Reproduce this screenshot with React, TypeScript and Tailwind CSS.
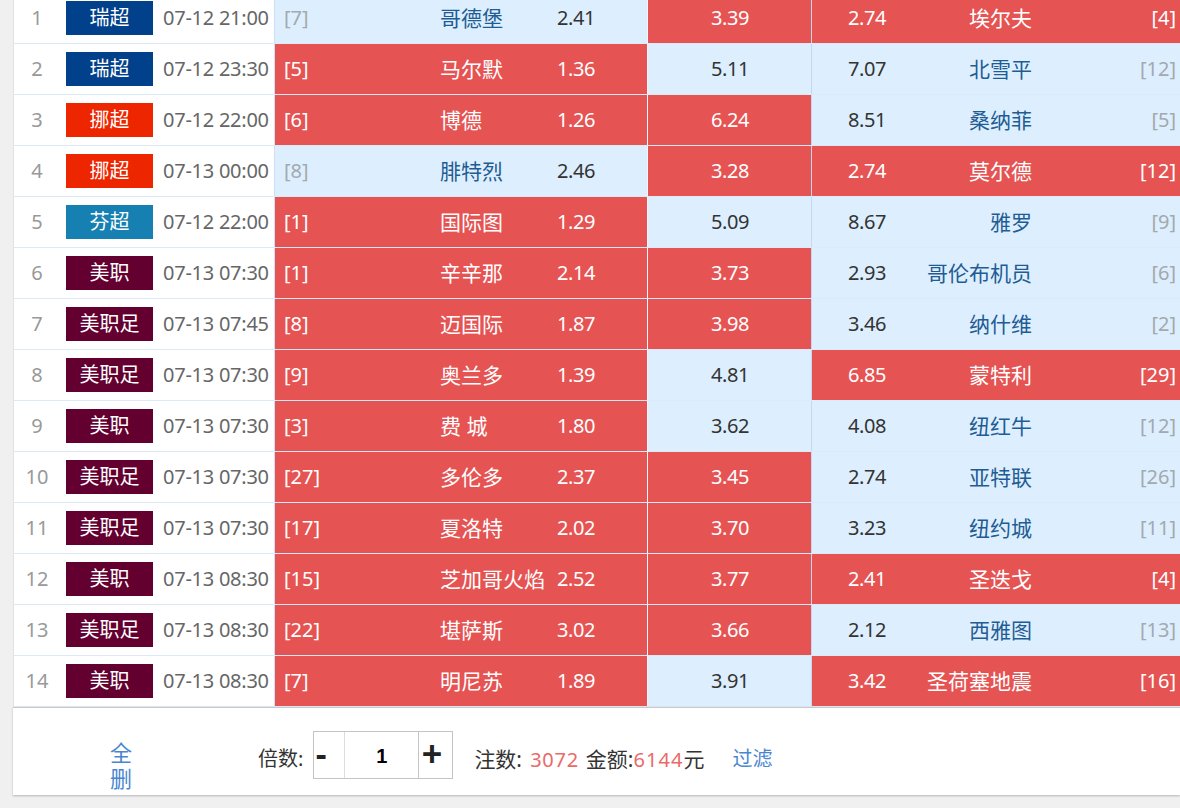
const COLORS = {
  swiss: "bg-[#01408a]",
  norway: "bg-[#ee2600]",
  finland: "bg-[#1680b3]",
  mls: "bg-[#64002f]",
};

type Match = {
  no: number;
  league: string;
  color: string;
  time: string;
  homeRank: string;
  home: string;
  win: string;
  draw: string;
  lose: string;
  away: string;
  awayRank: string;
  picks: [boolean, boolean, boolean];
};

const MATCHES: Match[] = [
  { no: 1, league: "瑞超", color: COLORS.swiss, time: "07-12 21:00", homeRank: "[7]", home: "哥德堡", win: "2.41", draw: "3.39", lose: "2.74", away: "埃尔夫", awayRank: "[4]", picks: [false, true, true] },
  { no: 2, league: "瑞超", color: COLORS.swiss, time: "07-12 23:30", homeRank: "[5]", home: "马尔默", win: "1.36", draw: "5.11", lose: "7.07", away: "北雪平", awayRank: "[12]", picks: [true, false, false] },
  { no: 3, league: "挪超", color: COLORS.norway, time: "07-12 22:00", homeRank: "[6]", home: "博德", win: "1.26", draw: "6.24", lose: "8.51", away: "桑纳菲", awayRank: "[5]", picks: [true, true, false] },
  { no: 4, league: "挪超", color: COLORS.norway, time: "07-13 00:00", homeRank: "[8]", home: "腓特烈", win: "2.46", draw: "3.28", lose: "2.74", away: "莫尔德", awayRank: "[12]", picks: [false, true, true] },
  { no: 5, league: "芬超", color: COLORS.finland, time: "07-12 22:00", homeRank: "[1]", home: "国际图", win: "1.29", draw: "5.09", lose: "8.67", away: "雅罗", awayRank: "[9]", picks: [true, false, false] },
  { no: 6, league: "美职", color: COLORS.mls, time: "07-13 07:30", homeRank: "[1]", home: "辛辛那", win: "2.14", draw: "3.73", lose: "2.93", away: "哥伦布机员", awayRank: "[6]", picks: [true, true, false] },
  { no: 7, league: "美职足", color: COLORS.mls, time: "07-13 07:45", homeRank: "[8]", home: "迈国际", win: "1.87", draw: "3.98", lose: "3.46", away: "纳什维", awayRank: "[2]", picks: [true, true, false] },
  { no: 8, league: "美职足", color: COLORS.mls, time: "07-13 07:30", homeRank: "[9]", home: "奥兰多", win: "1.39", draw: "4.81", lose: "6.85", away: "蒙特利", awayRank: "[29]", picks: [true, false, true] },
  { no: 9, league: "美职", color: COLORS.mls, time: "07-13 07:30", homeRank: "[3]", home: "费 城", win: "1.80", draw: "3.62", lose: "4.08", away: "纽红牛", awayRank: "[12]", picks: [true, false, false] },
  { no: 10, league: "美职足", color: COLORS.mls, time: "07-13 07:30", homeRank: "[27]", home: "多伦多", win: "2.37", draw: "3.45", lose: "2.74", away: "亚特联", awayRank: "[26]", picks: [true, true, false] },
  { no: 11, league: "美职足", color: COLORS.mls, time: "07-13 07:30", homeRank: "[17]", home: "夏洛特", win: "2.02", draw: "3.70", lose: "3.23", away: "纽约城", awayRank: "[11]", picks: [true, true, false] },
  { no: 12, league: "美职", color: COLORS.mls, time: "07-13 08:30", homeRank: "[15]", home: "芝加哥火焰", win: "2.52", draw: "3.77", lose: "2.41", away: "圣迭戈", awayRank: "[4]", picks: [true, true, true] },
  { no: 13, league: "美职足", color: COLORS.mls, time: "07-13 08:30", homeRank: "[22]", home: "堪萨斯", win: "3.02", draw: "3.66", lose: "2.12", away: "西雅图", awayRank: "[13]", picks: [true, true, false] },
  { no: 14, league: "美职", color: COLORS.mls, time: "07-13 08:30", homeRank: "[7]", home: "明尼苏", win: "1.89", draw: "3.91", lose: "3.42", away: "圣荷塞地震", awayRank: "[16]", picks: [true, false, true] },
];

function cellClass(on: boolean) {
  return on ? "bg-[#e55353] text-white" : "bg-[#ddeffe] text-[#333]";
}

function MatchRow({ m }: { m: Match }) {
  const [homeOn, drawOn, awayOn] = m.picks;
  return (
    <div className="flex h-[51px] border-b border-[#dde9f7] bg-white">
      <div className="w-[46px] shrink-0 pt-[10px] text-center text-[#999]">{m.no}</div>
      <div className="ml-[6px] mt-[8px] h-[34px] w-[87px] shrink-0">
        <div className={`flex h-full items-center justify-center pb-[1px] text-white ${m.color}`}>{m.league}</div>
      </div>
      <div className="ml-[10px] w-[111px] shrink-0 whitespace-nowrap pt-[10px] tracking-[-0.25px] text-[#666]">{m.time}</div>

      <div className={`flex w-[373px] shrink-0 border-l border-[#cfe0f2] pl-[9px] pt-[10px] ${cellClass(homeOn)}`}>
        <span className={`w-[156px] shrink-0 ${homeOn ? "text-white" : "text-[#a3a9ae]"}`}>{m.homeRank}</span>
        <span className={`w-[117px] shrink-0 whitespace-nowrap text-[21px] ${homeOn ? "text-white" : "text-[#1f5c94]"}`}>{m.home}</span>
        <span className="tracking-[-0.4px]">{m.win}</span>
      </div>

      <div className={`w-[164px] shrink-0 border-l border-[#f3f6fa] pl-[1px] pt-[10px] text-center tracking-[-0.4px] ${cellClass(drawOn)}`}>{m.draw}</div>

      <div className={`flex flex-1 border-l border-[#c4d9ee] pr-[4px] pt-[10px] ${cellClass(awayOn)}`}>
        <span className="w-[36px] shrink-0" />
        <span className="w-[50px] shrink-0 tracking-[-0.4px]">{m.lose}</span>
        <span className={`w-[134px] shrink-0 whitespace-nowrap text-right text-[21px] ${awayOn ? "text-white" : "text-[#1f5c94]"}`}>{m.away}</span>
        <span className={`flex-1 text-right ${awayOn ? "text-white" : "text-[#a3a9ae]"}`}>{m.awayRank}</span>
      </div>
    </div>
  );
}

export default function App() {
  return (
    <div className="h-[808px] w-[1180px] overflow-hidden bg-[#f0f0f0] pl-[13px] font-['Noto_Sans','Noto_Sans_CJK_SC',sans-serif] text-[20px] leading-[30px]">
      <div className="-mt-[7px] border-l border-[#e2e2e2]">
        {MATCHES.map((m) => (
          <MatchRow key={m.no} m={m} />
        ))}
      </div>

      <div className="flex h-[88px] items-start border-t border-[#c9c9c9] bg-white shadow-[0_1px_2px_rgba(0,0,0,0.25)]">
        <a className="ml-[97px] mt-[31px] w-[22px] text-center text-[22px] leading-[26px] text-[#4a86d0]">
          全<br />删
        </a>
        <span className="ml-[126px] mt-[36px] whitespace-nowrap text-[#333]">倍数:</span>
        <div className="ml-[10px] mt-[23px] flex h-[48px] w-[140px] border border-[#c4c4c4] font-['Liberation_Sans',sans-serif] font-bold text-[#222]">
          <span className="w-[31px] border-r border-[#dcdcdc] pl-[1px] text-[34px] leading-[44px]">-</span>
          <span className="w-[74px] border-r border-[#c4c4c4] pt-[9px] text-center text-[20px] text-black">1</span>
          <span className="flex-1 pr-[8px] text-center text-[35px] leading-[44px]">+</span>
        </div>
        <div className="ml-[21px] mt-[36px] whitespace-nowrap text-[#333]">
          <span className="text-[21px]">注数:</span> <span className="ml-[3px] tracking-[0.7px] text-[#ea6a6a]">3072</span>
          <span className="ml-[7px] text-[21px]">金额:</span>
          <span className="tracking-[1.1px] text-[#ea6a6a]">6144</span>
          <span className="text-[21px]">元</span>
        </div>
        <a className="ml-[28px] mt-[36px] whitespace-nowrap text-[#4a86d0]">过滤</a>
      </div>
    </div>
  );
}
